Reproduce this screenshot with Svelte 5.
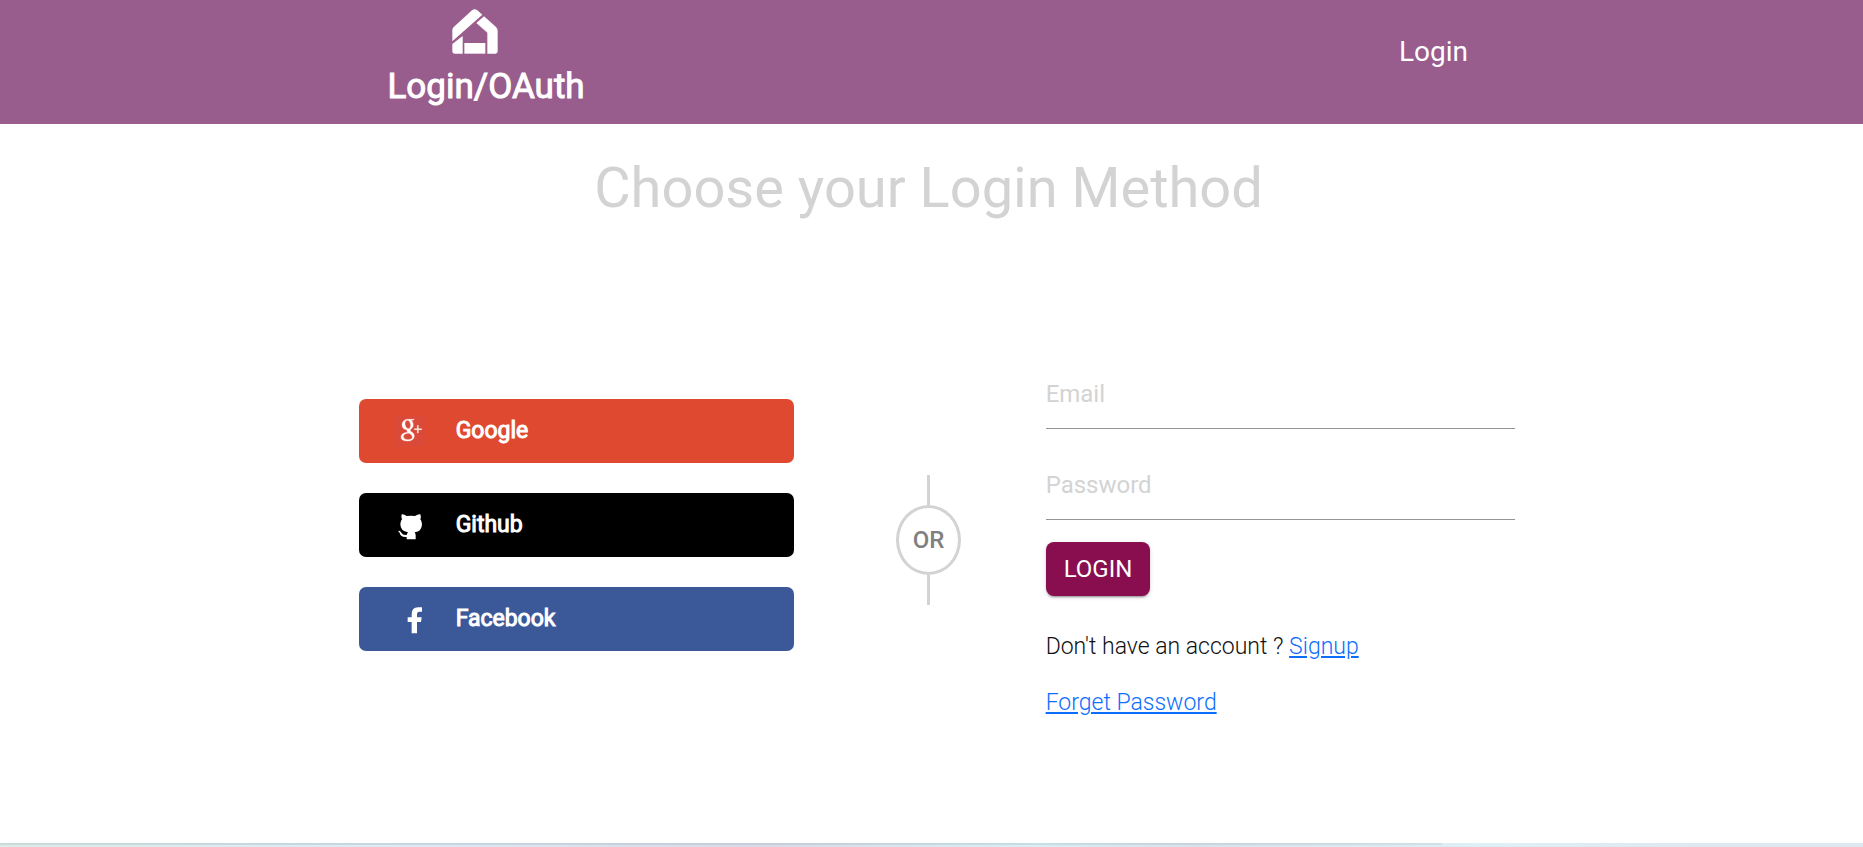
<script>
  let email = $state('');
  let password = $state('');
</script>

<div class="page">
  <header>
    <a class="brand" href="#home">
      <svg class="house" viewBox="246 27 138 135" aria-hidden="true">
        <path d="M247 124V90q0-6 5-10L306 31q8-7 16 0l15 13z" />
        <path d="M342 49l36 32q5 5 5 11v62q0 7-7 7h-24V98l-33-29z" />
        <path d="M278 108v53h-23q-8 0-8-8v-21z" />
        <path d="M283 129h63v32h-63z" />
      </svg>
      <span>Login/OAuth</span>
    </a>
    <nav><a href="#login">Login</a></nav>
  </header>

  <h1>Choose your Login Method</h1>

  <main>
    <div class="social">
      <button class="google" type="button">
        <svg viewBox="135 80 93 90" aria-hidden="true">
          <rect class="tile" x="135" y="80" width="93" height="90" />
          <path
            class="mark"
            fill-rule="evenodd"
            d="M171 90h22l-4 3h-6q8 6 7 14 0 7-7 12-5 4-1 7 11 6 11 14-1 15-21 15-19 0-19-12 0-12 20-14-4-4-2-8-14 0-15-14 0-14 15-17zM172 93q-8 1-7 12 2 13 10 13 8-1 7-12-2-13-10-13zM175 132q-15 1-15 10 1 9 14 9 13 0 13-8 0-6-9-11z"
          />
          <path class="mark" d="M193 118h9v-10h3v10h10v3h-10v10h-3v-10h-9z" />
        </svg>
        <span>Google</span>
      </button>
      <button class="github" type="button">
        <svg viewBox="135 362 93 90" aria-hidden="true">
          <path d="M155 375q5-2 15 5 13-2 25 0 11-7 16-5 3 7 0 15 5 6 5 14 0 22-22 25 3 4 3 9v12h-27v-7q-18 2-21-12-1-3-5-6 6-3 10 5 4 8 16 7 1-5 4-8-23-4-23-25 0-8 5-14-3-8-1-15z" />
        </svg>
        <span>Github</span>
      </button>
      <button class="facebook" type="button">
        <svg viewBox="135 644 93 90" aria-hidden="true">
          <path d="M185 732v-34h-12v-14h12v-9q0-21 19-21h12v13h-8q-7 0-7 8v9h14l-2 14h-12v34z" />
        </svg>
        <span>Facebook</span>
      </button>
    </div>

    <div class="divider"><span>OR</span></div>

    <form>
      <input type="email" aria-label="Email" placeholder="Email" bind:value={email} />
      <input type="password" aria-label="Password" placeholder="Password" bind:value={password} />
      <button class="submit" type="button">LOGIN</button>
      <p>Don't have an account ? <a href="#signup">Signup</a></p>
      <p><a href="#forget">Forget Password</a></p>
    </form>
  </main>

  <footer></footer>
</div>

<style>
  :global(body) {
    margin: 0;
    background: #fff;
  }
  .page {
    min-height: 100vh;
    display: flex;
    flex-direction: column;
    box-sizing: border-box;
    font-family: Roboto, sans-serif;
    font-size: 24px;
    color: #212529;
  }
  header {
    display: flex;
    justify-content: space-between;
    align-items: flex-start;
    height: 124px;
    padding: 0 21.2% 0 20.8%;
    background: #985c8d;
  }
  header a {
    color: #fff;
    text-decoration: none;
  }
  .brand {
    display: flex;
    flex-direction: column;
    padding-top: 9px;
    font-size: 35px;
    line-height: 44px;
    gap: 11px;
    -webkit-text-stroke: 1px #fff;
  }
  .house {
    width: 46px;
    height: 45px;
    margin-left: 64px;
    fill: #fff;
    stroke: none;
  }
  nav {
    padding-top: 35px;
    font-size: 28px;
    line-height: 34px;
  }
  h1 {
    margin: 31px 6px 0 0;
    font-size: 56px;
    line-height: 67px;
    font-weight: 400;
    text-align: center;
    color: #d3d3d3;
  }
  main {
    display: grid;
    grid-template-columns: 435fr 252fr 469fr;
    align-items: start;
    padding: 141px 18.7% 0 19.25%;
  }
  .social {
    display: flex;
    flex-direction: column;
    gap: 30px;
    padding-top: 36px;
  }
  .social button {
    display: flex;
    align-items: center;
    gap: 30px;
    height: 64px;
    padding: 0 36px;
    border: 0;
    border-radius: 7px;
    color: #fff;
    font: 400 23px/30px Roboto, sans-serif;
    -webkit-text-stroke: 1px #fff;
    cursor: pointer;
  }
  .social svg {
    width: 31px;
    height: 30px;
    fill: #fff;
    stroke: none;
  }
  .social .tile {
    fill: #db4a39;
  }
  .social .mark {
    stroke: #fff;
    stroke-width: 1px;
  }
  .google {
    background: #df4930;
  }
  .github {
    background: #000;
  }
  .facebook {
    background: #3b5998;
  }
  .divider {
    display: flex;
    flex-direction: column;
    align-items: center;
    padding: 112px 0 0 18px;
    color: gray;
    font-weight: 500;
  }
  .divider::before,
  .divider::after {
    content: '';
    width: 3px;
    height: 30px;
    background: #d3d3d3;
  }
  .divider span {
    display: flex;
    align-items: center;
    justify-content: center;
    box-sizing: border-box;
    width: 65px;
    height: 70px;
    border: 3px solid #d3d3d3;
    border-radius: 50%;
  }
  form {
    display: flex;
    flex-direction: column;
    align-items: flex-start;
  }
  input {
    box-sizing: border-box;
    width: 100%;
    height: 66px;
    margin: 0 0 25px;
    padding: 0 0 4px;
    border: 0;
    border-bottom: 1px solid #949494;
    background: transparent;
    font: 400 24px/28px Roboto, sans-serif;
    color: #212529;
    outline: none;
  }
  input::placeholder {
    color: #d3d3d3;
    opacity: 1;
  }
  .submit {
    height: 54px;
    margin: -3px 0 33px;
    padding: 0 18px;
    border: 0;
    border-radius: 8px;
    background: #880e4f;
    box-shadow:
      0 3px 1px -2px rgba(0, 0, 0, 0.2),
      0 2px 2px rgba(0, 0, 0, 0.14),
      0 1px 5px rgba(0, 0, 0, 0.12);
    color: #fff;
    font: 400 24px/28px Roboto, sans-serif;
    cursor: pointer;
  }
  p {
    margin: 0 0 20px;
    font-size: 23px;
    line-height: 36px;
    font-weight: 300;
    color: #111;
  }
  p a {
    color: #0d6efd;
  }
  footer {
    height: 4px;
    margin-top: auto;
    background:
      linear-gradient(90deg, #c9dcd9, #c5d6e3 30%, #c8cddc 53%, #c4dfe5 72%, #c8d3df 82%, #cfe1e4) 0 0 / 77.4% 2px no-repeat,
      linear-gradient(90deg, #dcece9, #e0ebf5 20%, #d8dbe6 41%, #dbeff5 55%, #d8e2eb 64%, #def1f6 80%, #dfe7ef 92%);
  }
</style>
